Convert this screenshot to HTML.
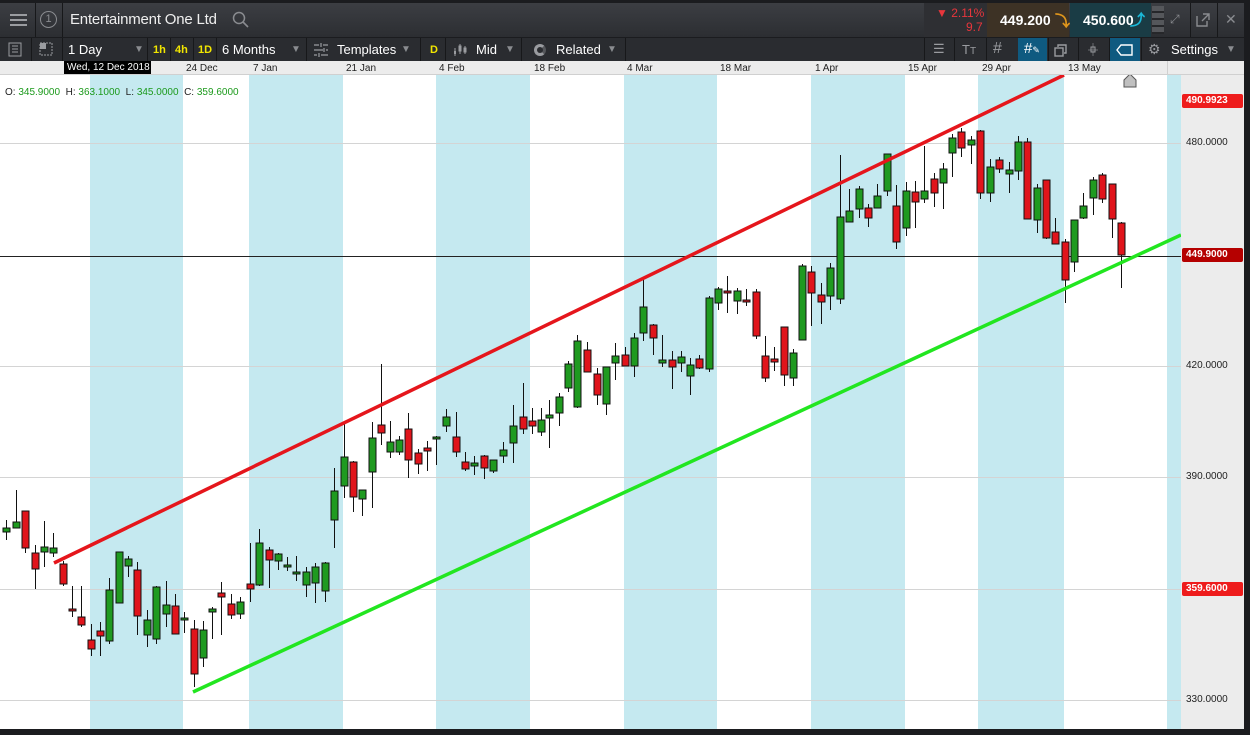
<!DOCTYPE html>
<html><head><meta charset="utf-8">
<style>
*{margin:0;padding:0;box-sizing:border-box}
body{width:1250px;height:735px;overflow:hidden;background:#1b1c1f;font-family:"Liberation Sans",sans-serif;position:relative}
.top{position:absolute;left:0;top:3px;width:1244px;height:34px;background:linear-gradient(#3c3e43,#2c2e32);}
.tb{position:absolute;left:0;top:37px;width:1244px;height:24px;background:#2a2c30;border-top:1px solid #1b1c1f}
.t{position:absolute;color:#fff;white-space:nowrap}
.sep{position:absolute;top:0;width:1px;height:100%;background:#17181a}
.y{color:#f2e600;font-weight:bold;font-size:11px}
.arr{color:#8a8c90;font-size:10px}
.axis{position:absolute;left:0;top:61px;width:1244px;height:14px;background:#ececec;border-bottom:1px solid #d0d0d0}
.d{position:absolute;top:2px;font-size:10px;color:#222}
.pa{position:absolute;left:1181px;top:75px;width:63px;height:654px;background:#ececec}
.pl{position:absolute;left:1186px;font-size:10px;color:#222}
.pb{position:absolute;left:1182px;width:61px;height:14px;font-size:10px;font-weight:bold;color:#fff;padding:1px 0 0 4px;border-radius:2px}
.bbox{position:absolute;top:0;height:24px;background:#0f5a80}
</style></head><body>
<div class="top">
 <div style="position:absolute;left:10px;top:11px;width:17px;height:2px;background:#9a9ca0;box-shadow:0 5px 0 #9a9ca0,0 10px 0 #9a9ca0"></div>
 <div class="sep" style="left:35px"></div>
 <div style="position:absolute;left:40px;top:8px;width:17px;height:17px;border:1.5px solid #8a8c90;border-radius:50%;color:#8a8c90;font-size:11px;text-align:center;line-height:14px">1</div>
 <div class="sep" style="left:62px"></div>
 <div class="t" style="left:70px;top:8px;font-size:15px;letter-spacing:-0.2px;color:#eee">Entertainment One Ltd</div>
 <svg style="position:absolute;left:232px;top:8px" width="18" height="18"><circle cx="7" cy="7" r="5.5" stroke="#8a8c90" stroke-width="1.5" fill="none"/><path d="M11 11l5 5" stroke="#8a8c90" stroke-width="1.6"/></svg>
 <div style="position:absolute;left:924px;top:0;width:63px;height:34px;background:#2e2f33"></div>
 <div class="t" style="left:936px;top:3px;font-size:12px;color:#e8363c">▼ 2.11%</div>
 <div class="t" style="left:966px;top:17px;font-size:12px;color:#e8363c">9.7</div>
 <div style="position:absolute;left:987px;top:0;width:82px;height:34px;background:#3d3225"></div>
 <div class="t" style="left:1000px;top:9px;font-size:14px;font-weight:bold">449.200</div>
 <div class="t" style="left:1055px;top:7px;font-size:15px;font-weight:bold;color:#e0961c">⤵</div>
 <div style="position:absolute;left:1070px;top:0;width:81px;height:34px;background:#1a3c45"></div>
 <div class="t" style="left:1083px;top:9px;font-size:14px;font-weight:bold">450.600</div>
 <div class="t" style="left:1130px;top:6px;font-size:15px;font-weight:bold;color:#1ab8d8">⤴</div>
 <div style="position:absolute;left:1152px;top:3px;width:12px;height:28px;background:repeating-linear-gradient(#55575b 0 5px,#26272a 5px 7px)"></div>
 <div class="sep" style="left:1190px"></div><div class="sep" style="left:1217px"></div>
 <div class="t" style="left:1170px;top:9px;font-size:12px;color:#8a8c90">⤢</div>
 <svg style="position:absolute;left:1196px;top:10px" width="15" height="15"><path d="M1 3v10h10V8M7 1h6v6M13 1L6 8" stroke="#8a8c90" stroke-width="1.4" fill="none"/></svg>
 <div class="t" style="left:1225px;top:8px;font-size:14px;color:#8a8c90">✕</div>
</div>
<div class="tb">
 <svg style="position:absolute;left:8px;top:4px" width="15" height="15"><rect x="1" y="1" width="12" height="13" fill="none" stroke="#9a9ca0"/><path d="M4 4h6M4 7h6M4 10h6" stroke="#9a9ca0"/></svg>
 <div class="sep" style="left:31px"></div>
 <svg style="position:absolute;left:39px;top:4px" width="15" height="15"><rect x="1" y="1" width="12" height="12" fill="none" stroke="#9a9ca0" stroke-dasharray="2 1"/><rect x="1" y="1" width="6" height="6" fill="#9a9ca0"/></svg>
 <div class="sep" style="left:62px"></div>
 <div class="t" style="left:68px;top:4px;font-size:13px">1 Day</div>
 <div class="t arr" style="left:134px;top:6px">▼</div>
 <div class="sep" style="left:147px"></div>
 <div class="t y" style="left:153px;top:6px">1h</div><div class="sep" style="left:170px"></div>
 <div class="t y" style="left:175px;top:6px">4h</div><div class="sep" style="left:193px"></div>
 <div class="t y" style="left:198px;top:6px">1D</div><div class="sep" style="left:216px"></div>
 <div class="t" style="left:222px;top:4px;font-size:13px">6 Months</div>
 <div class="t arr" style="left:291px;top:6px">▼</div>
 <div class="sep" style="left:306px"></div>
 <svg style="position:absolute;left:313px;top:5px" width="16" height="14"><path d="M1 2h5M10 2h5M1 7h9M13 7h2M1 12h3M8 12h7M8 0v4M11 5v4M6 10v4" stroke="#9a9ca0" stroke-width="1.2"/></svg>
 <div class="t" style="left:337px;top:4px;font-size:13px">Templates</div>
 <div class="t arr" style="left:401px;top:6px">▼</div>
 <div class="sep" style="left:420px"></div>
 <div class="t y" style="left:430px;top:6px">D</div>
 <div class="sep" style="left:445px"></div>
 <svg style="position:absolute;left:452px;top:4px" width="16" height="15"><path d="M3 6v8M8 2v10M13 4v8" stroke="#9a9ca0"/><rect x="2" y="9" width="2" height="3" fill="#9a9ca0"/><rect x="7" y="4" width="2" height="5" fill="none" stroke="#9a9ca0"/><rect x="12" y="6" width="2" height="4" fill="none" stroke="#9a9ca0"/></svg>
 <div class="t" style="left:476px;top:4px;font-size:13px">Mid</div>
 <div class="t arr" style="left:505px;top:6px">▼</div>
 <div class="sep" style="left:521px"></div>
 <div style="position:absolute;left:534px;top:6px;width:12px;height:12px;border-radius:50%;border:3px solid #9a9ca0;border-right-color:#55575b"></div>
 <div class="t" style="left:556px;top:4px;font-size:13px">Related</div>
 <div class="t arr" style="left:607px;top:6px">▼</div>
 <div class="sep" style="left:625px"></div>
 <div class="sep" style="left:924px"></div>
 <div class="t" style="left:933px;top:3px;font-size:13px;color:#9a9ca0">☰</div>
 <div class="sep" style="left:954px"></div>
 <div class="t" style="left:962px;top:4px;font-size:13px;color:#9a9ca0">T<span style="font-size:10px">T</span></div>
 <div class="sep" style="left:986px"></div>
 <div class="t" style="left:993px;top:2px;font-size:16px;color:#9a9ca0">#</div>
 <div class="bbox" style="left:1018px;width:29px"></div>
 <div class="t" style="left:1024px;top:2px;font-size:15px;color:#fff">#<span style="font-size:9px">✎</span></div>
 <div class="sep" style="left:1048px"></div>
 <svg style="position:absolute;left:1054px;top:5px" width="15" height="14"><rect x="1" y="5" width="8" height="8" fill="none" stroke="#9a9ca0" stroke-width="1.4"/><path d="M4 4V2h8v8h-2" stroke="#9a9ca0" stroke-width="1.4" fill="none"/></svg>
 <div class="sep" style="left:1078px"></div>
 <svg style="position:absolute;left:1086px;top:4px" width="15" height="15"><path d="M7 1v13M2 8h10" stroke="#6a6c70"/><rect x="5" y="5" width="4" height="5" fill="none" stroke="#9a9ca0"/></svg>
 <div class="sep" style="left:1109px"></div>
 <div class="bbox" style="left:1110px;width:30px"></div>
 <svg style="position:absolute;left:1116px;top:5px" width="18" height="14"><path d="M5 2h11v10H5L1 7z" fill="none" stroke="#fff" stroke-width="1.4"/></svg>
 <div class="sep" style="left:1141px"></div>
 <div class="t" style="left:1148px;top:3px;font-size:14px;color:#9a9ca0">⚙</div>
 <div class="t" style="left:1171px;top:4px;font-size:13px">Settings</div>
 <div class="t arr" style="left:1226px;top:6px">▼</div>
</div>
<div class="axis">
 <div style="position:absolute;left:64px;top:0;width:87px;height:13px;background:#000"></div>
 <div class="d" style="left:67px;top:1px;color:#fff">Wed, 12 Dec 2018</div>
 <div class="d" style="left:186px">24 Dec</div><div class="d" style="left:253px">7 Jan</div>
 <div class="d" style="left:346px">21 Jan</div><div class="d" style="left:439px">4 Feb</div>
 <div class="d" style="left:534px">18 Feb</div><div class="d" style="left:627px">4 Mar</div>
 <div class="d" style="left:720px">18 Mar</div><div class="d" style="left:815px">1 Apr</div>
 <div class="d" style="left:908px">15 Apr</div><div class="d" style="left:982px">29 Apr</div>
 <div class="d" style="left:1068px">13 May</div>
 <div style="position:absolute;left:1167px;top:0;width:1px;height:14px;background:#d0d0d0"></div>
</div>
<svg style="position:absolute;left:0;top:75px" width="1181" height="654" viewBox="0 75 1181 654">
<rect x="0" y="75" width="1181" height="654" fill="#fff"/>
<g fill="#c5e9f0"><rect x="90" y="75" width="93" height="654"/><rect x="249" y="75" width="94" height="654"/><rect x="436" y="75" width="94" height="654"/><rect x="624" y="75" width="93" height="654"/><rect x="811" y="75" width="94" height="654"/><rect x="978" y="75" width="86" height="654"/><rect x="1167" y="75" width="14" height="654"/></g>
<g stroke="#d4d4d4" stroke-width="1"><path d="M0 143.5H1181M0 366.5H1181M0 477.5H1181M0 589.5H1181M0 700.5H1181"/></g>
<path d="M0 256.5H1181" stroke="#222" stroke-width="1"/>
<g id="c" stroke="#111" stroke-width="1"></g>
<path d="M54 563L1064 75" stroke="#e5161c" stroke-width="3.5"/>
<path d="M193 692L1181 235" stroke="#22e620" stroke-width="3.5"/>
<path d="M1124 87V80l6-6 6 6v7z" fill="#c0c0c0" stroke="#555"/>
</svg>
<div class="t" style="left:5px;top:87px;font-size:10px;color:#222">O: <span style="color:#1c9a1c">345.9000</span>&nbsp; H: <span style="color:#1c9a1c">363.1000</span>&nbsp; L: <span style="color:#1c9a1c">345.0000</span>&nbsp; C: <span style="color:#1c9a1c">359.6000</span></div>
<div class="pa"></div>
<div class="pb" style="top:94px;background:#ee1c1c">490.9923</div>
<div class="pl" style="top:137px">480.0000</div>
<div class="pb" style="top:248px;background:#b50000">449.9000</div>
<div class="pl" style="top:360px">420.0000</div>
<div class="pl" style="top:471px">390.0000</div>
<div class="pb" style="top:582px;background:#ee1c1c">359.6000</div>
<div class="pl" style="top:694px">330.0000</div>
<script>
var d="6,520,540,528,532,g;16,490,528,522,528,g;25,511,553,511,548,r;35,545,589,553,569,r;44,521,567,547,552,g;53,533,557,548,553,g;63,561,586,564,584,r;72,586,617,609,611,r;81,586,627,617,625,r;91,624,656,640,649,r;100,622,656,631,636,r;109,578,644,590,641,g;119,552,603,552,603,g;128,556,577,559,566,g;137,562,635,570,616,r;147,610,647,620,635,g;156,586,644,587,639,g;166,581,627,605,614,g;175,594,634,606,634,r;184,612,633,618,620,g;194,620,687,629,674,r;203,621,667,630,658,g;212,607,639,609,612,g;221,582,635,593,597,r;231,594,619,604,615,r;240,597,619,602,614,g;250,543,602,584,589,r;259,529,586,543,585,g;269,547,588,550,560,r;278,553,570,554,561,g;287,557,571,565,567,g;296,556,581,572,574,g;306,567,597,572,585,g;315,563,603,567,583,g;325,562,602,563,591,g;334,468,548,491,520,g;344,423,498,457,486,g;353,461,512,462,497,r;362,490,516,490,499,g;372,422,508,438,472,g;381,364,445,425,433,r;390,421,458,442,452,g;399,436,455,440,452,g;408,413,478,429,460,r;418,449,474,453,464,r;427,441,471,448,451,r;436,436,465,437,439,g;446,409,432,417,426,g;456,412,457,437,452,r;465,452,471,462,469,r;474,456,475,463,466,g;484,455,479,456,468,r;493,460,473,460,471,g;503,442,463,450,456,g;513,405,463,426,443,g;523,383,434,417,429,r;532,408,434,421,426,r;541,408,436,420,432,g;549,400,448,415,418,g;559,393,426,397,413,g;568,361,392,364,388,g;577,335,408,341,407,g;587,342,372,350,372,r;597,368,405,374,395,r;606,367,415,367,404,g;615,343,380,356,363,g;625,347,366,355,366,r;634,333,377,338,366,g;643,277,341,307,333,g;653,324,355,325,338,r;662,335,367,360,363,g;672,351,389,360,367,r;681,351,372,357,363,g;690,358,395,365,376,g;699,355,369,359,368,r;709,296,372,298,369,g;718,287,310,289,303,g;727,276,313,291,293,r;737,288,314,291,301,g;746,289,306,300,302,r;756,289,339,292,336,r;765,336,382,356,378,r;774,347,371,359,362,r;784,327,386,327,375,r;793,349,386,353,378,g;802,264,340,266,340,g;811,266,326,272,293,r;821,283,324,295,302,r;830,263,310,268,296,g;840,155,304,217,299,g;849,189,222,211,222,g;859,186,218,189,209,g;868,204,227,208,218,r;877,184,208,196,208,g;887,154,196,154,191,g;896,185,249,206,242,r;906,182,236,191,228,g;915,181,228,192,202,r;924,146,203,191,199,g;934,173,207,179,193,r;943,163,209,169,183,g;952,134,177,138,153,g;961,128,157,132,148,r;971,136,164,140,145,g;980,130,199,131,193,r;990,159,202,167,193,g;999,157,173,160,169,r;1009,162,193,170,174,g;1018,136,180,142,171,g;1027,138,219,142,219,r;1037,184,233,188,220,g;1046,180,239,180,238,r;1055,218,244,232,244,r;1065,239,303,242,280,r;1074,220,272,220,262,g;1083,193,219,206,218,g;1093,177,215,180,198,g;1102,173,203,175,199,r;1112,184,238,184,219,r;1121,222,288,223,255,r";
var s="";d.split(";").forEach(function(c){var a=c.split(","),x=+a[0];var h=Math.max(2,a[4]-a[3]);s+='<path d="M'+(x+.5)+' '+a[1]+'V'+a[2]+'"/><rect x="'+(x-3)+'" y="'+a[3]+'" width="7" height="'+h+'" fill="'+(a[5]=="g"?"#1f9a20":"#e0141b")+'"/>';});
document.getElementById("c").innerHTML=s;
</script>
</body></html>
